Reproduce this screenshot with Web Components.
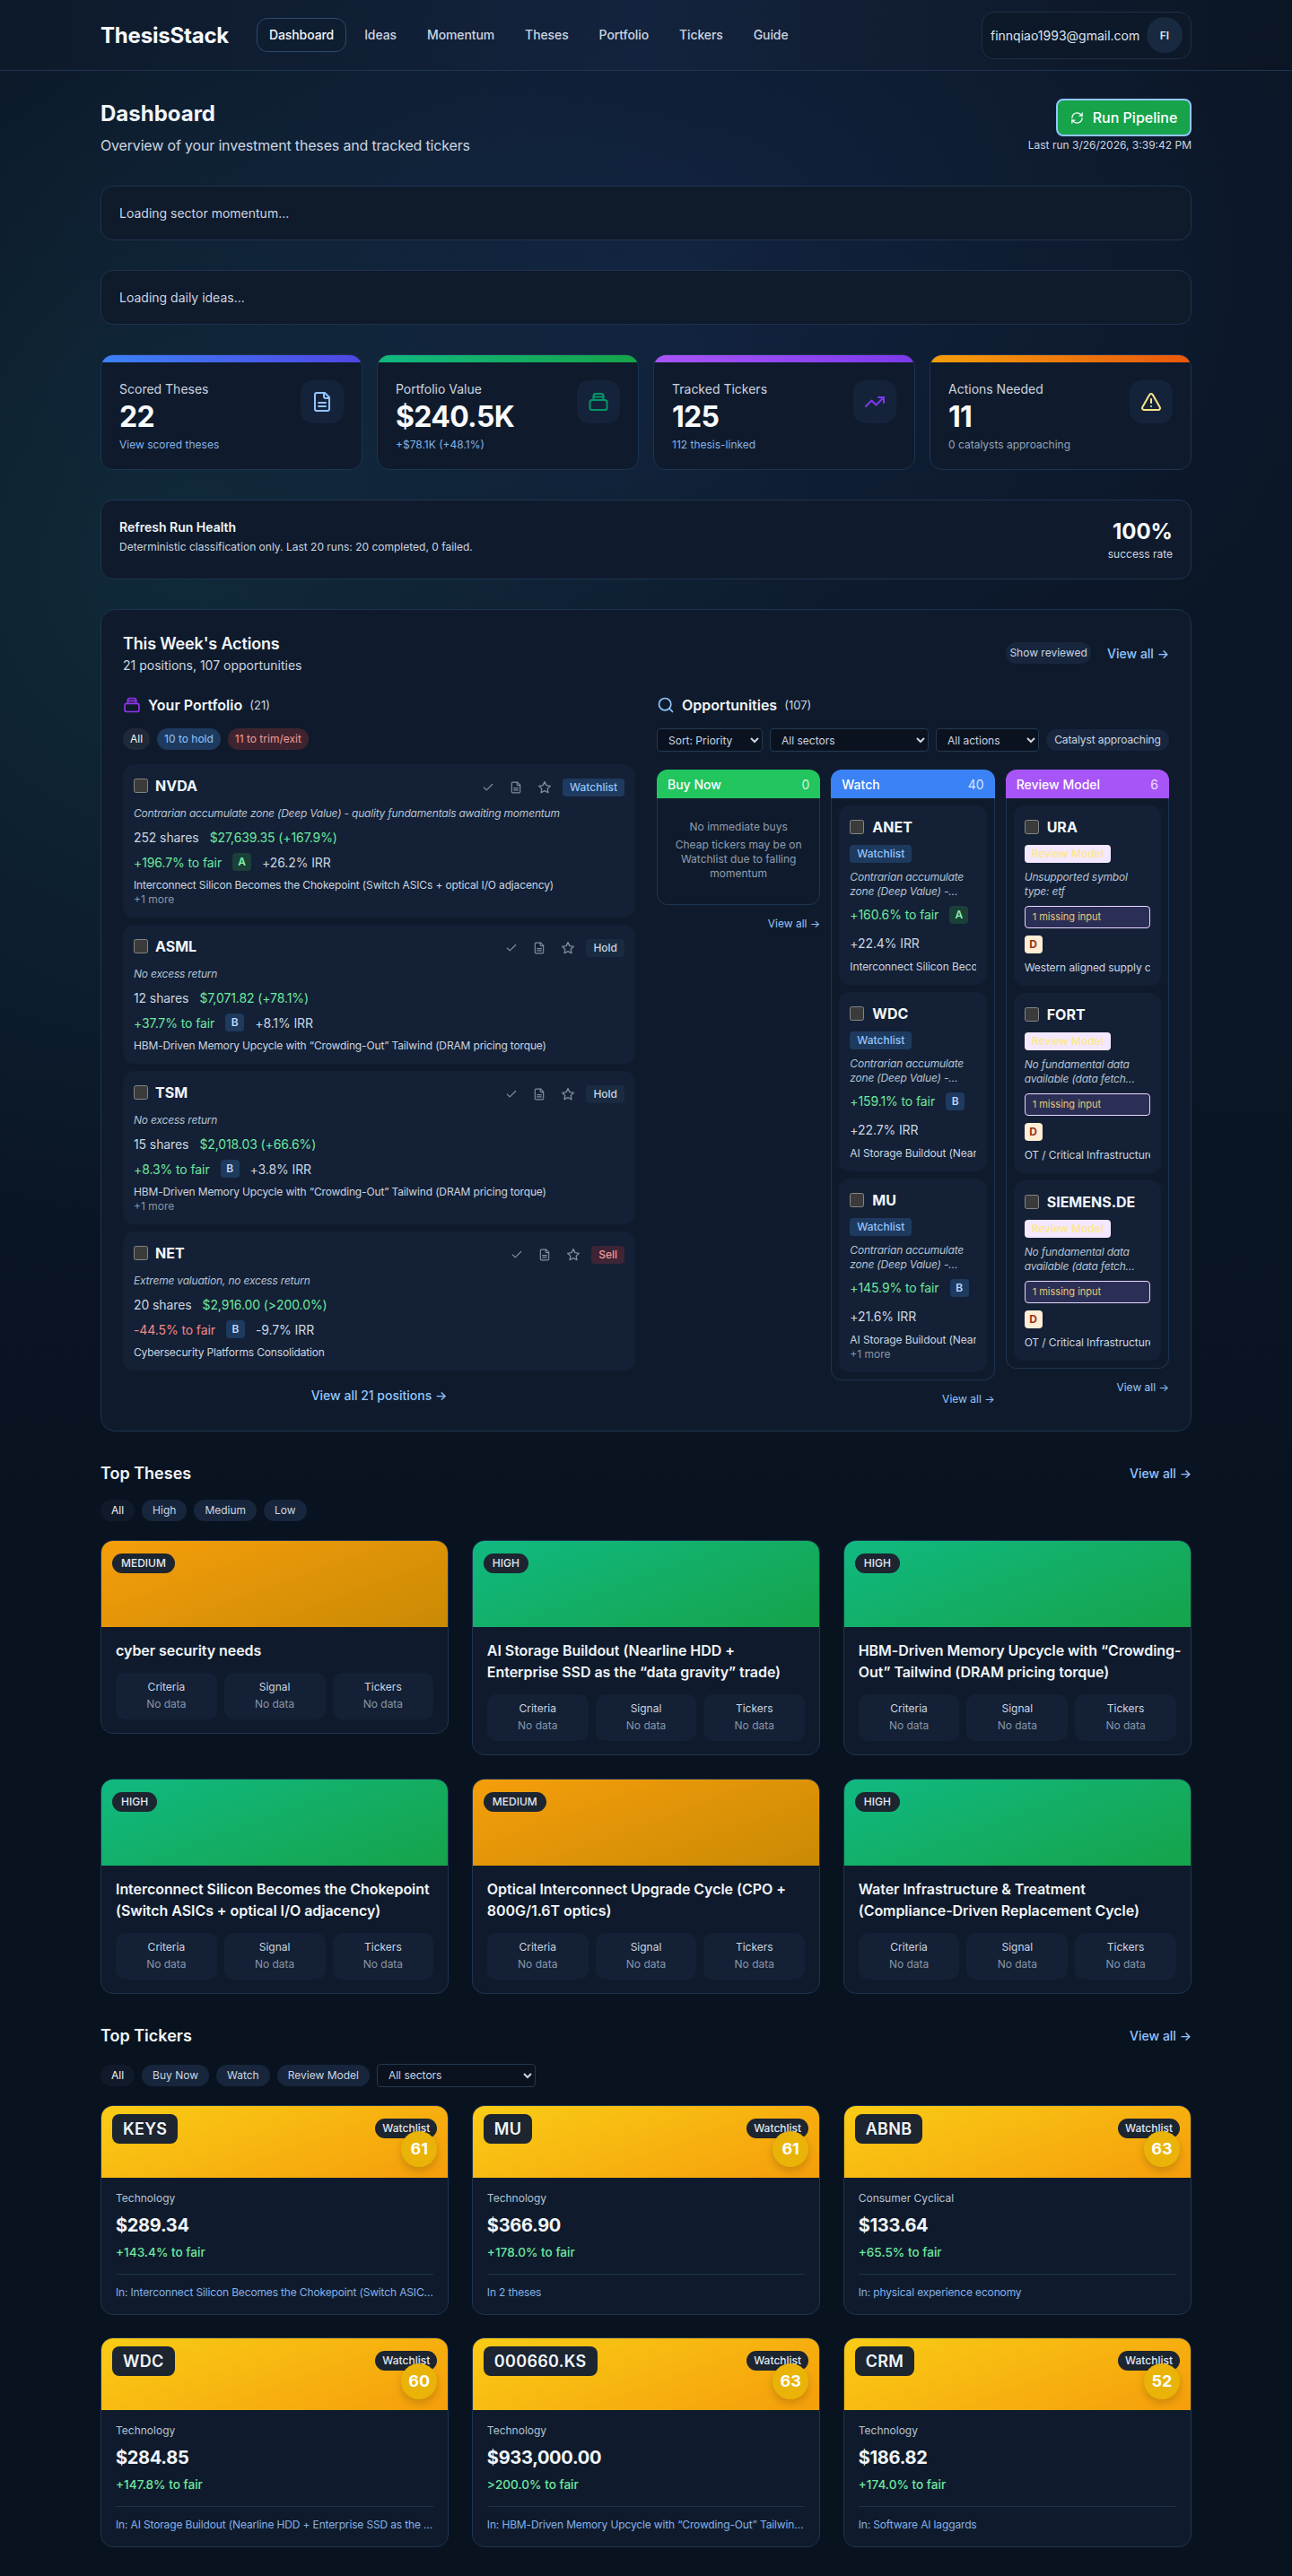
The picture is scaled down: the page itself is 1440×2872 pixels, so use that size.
<!DOCTYPE html>
<html lang="en">
<head>
<meta charset="utf-8">
<title>ThesisStack</title>
<style>
	html { background: #08111e; }
	body {
		margin: 0;
		min-height: 2872px;
		font-family: Inter, "Liberation Sans", sans-serif;
		color: #e2e8f0;
		background:
			radial-gradient(760px 620px at 52% 10%, rgba(24,46,84,.55), transparent 100%),
			radial-gradient(720px 760px at 14% 22%, rgba(20,58,72,.55), transparent 100%),
			linear-gradient(180deg, #0b1626 0%, #0b1626 40%, #09121f 62%, #09121f 100%);
		background-repeat: no-repeat;
	}
	main { display: block; padding: 32px 112px; }
	section-gap { display: block; height: 33px; }
	.stats { display: grid; grid-template-columns: repeat(4, 1fr); gap: 16px; }
</style>
</head>
<body>
<app-header></app-header>
<main>
	<page-head></page-head>
	<loading-card>Loading sector momentum...</loading-card>
	<section-gap></section-gap>
	<loading-card>Loading daily ideas...</loading-card>
	<section-gap></section-gap>
	<div class="stats">
		<stat-card label="Scored Theses" value="22" sub="View scored theses" bar="#3b82f6,#4f46e5" icon="file" tint="#93c5fd" link></stat-card>
		<stat-card label="Portfolio Value" value="$240.5K" sub="+$78.1K (+48.1%)" bar="#10b981,#16a34a" icon="bag" tint="#059669" link></stat-card>
		<stat-card label="Tracked Tickers" value="125" sub="112 thesis-linked" bar="#a855f7,#7c3aed" icon="trend" tint="#7c3aed" link></stat-card>
		<stat-card label="Actions Needed" value="11" sub="0 catalysts approaching" bar="#f59e0b,#ea580c" icon="alert" tint="#fde68a"></stat-card>
	</div>
	<section-gap></section-gap>
	<health-card></health-card>
	<section-gap></section-gap>
	<actions-panel></actions-panel>
	<thesis-section></thesis-section>
	<ticker-section></ticker-section>
</main>
<script>
const base = `
	:host { display: block; box-sizing: border-box; }
	* { box-sizing: border-box; }
	a { color: #93c5fd; text-decoration: none; }
	svg { display: block; fill: none; stroke: currentColor; stroke-width: 2; stroke-linecap: round; stroke-linejoin: round; }
`;
const icons = {
	file: '<path d="M15 2H6a2 2 0 0 0-2 2v16a2 2 0 0 0 2 2h12a2 2 0 0 0 2-2V7z"/><path d="M14 2v4a2 2 0 0 0 2 2h4"/><path d="M16 13H8"/><path d="M16 17H8"/>',
	bag: '<path d="M6.5 10V5.5a2.5 2.5 0 0 1 2.5-2.5h6a2.5 2.5 0 0 1 2.5 2.5V10"/><path d="M6.5 6.5h11"/><rect x="2.5" y="10" width="19" height="11" rx="2.5"/>',
	trend: '<polyline points="22 7 13.5 15.5 8.5 10.5 2 17"/><polyline points="16 7 22 7 22 13"/>',
	alert: '<path d="m21.73 18-8-14a2 2 0 0 0-3.48 0l-8 14A2 2 0 0 0 4 21h16a2 2 0 0 0 1.73-3"/><path d="M12 9v4"/><path d="M12 17h.01"/>',
	refresh: '<path d="M3 12a9 9 0 0 1 9-9 9.75 9.75 0 0 1 6.74 2.74L21 8"/><path d="M21 3v5h-5"/><path d="M21 12a9 9 0 0 1-9 9 9.75 9.75 0 0 1-6.74-2.74L3 16"/><path d="M8 16H3v5"/>',
	search: '<circle cx="11" cy="11" r="8"/><path d="m21 21-4.3-4.3"/>',
	check: '<path d="M20 6 9 17l-5-5"/>',
	star: '<path d="M12 2.5l2.95 5.97 6.58.96-4.76 4.64 1.12 6.55L12 17.52l-5.89 3.1 1.12-6.55-4.76-4.64 6.58-.96z"/>'
};
const icon = (name, size, width) => `<svg viewBox="0 0 24 24" width="${size}" height="${size}" style="stroke-width:${width || 2}">${icons[name]}</svg>`;

class BaseElement extends HTMLElement {
	constructor() {
		super();
		this.attachShadow({ mode: "open" });
	}
	connectedCallback() {
		this.shadowRoot.innerHTML = `<style>${base}${this.constructor.styles}</style>${this.render()}`;
	}
	attr(name) {
		return this.getAttribute(name) || '';
	}
}

class AppHeader extends BaseElement {
	static styles = `
		:host { height: 79px; border-bottom: 1px solid #20344f;
			background: linear-gradient(90deg, #0d1a2b 0%, #14233d 50%, #0b1523 100%); }
		.bar { height: 78px; padding: 0 112px; display: flex; align-items: center; }
		.logo { font-size: 24px; font-weight: 700; color: #f8fafc; width: 174px; letter-spacing: -.2px; }
		nav { display: flex; gap: 6px; flex: 1; letter-spacing: -.1px; }
		nav a { height: 38px; line-height: 36px; padding: 0 13px; border: 1px solid transparent; border-radius: 12px; font-size: 14px; font-weight: 500; color: #cbd5e1; }
		nav a.on { color: #f1f5f9; border-color: #2c4a6e; background: #0f1d31; }
		.user { height: 53px; width: 234px; display: flex; align-items: center; justify-content: space-between; padding: 0 9px; border: 1px solid #1e3048; border-radius: 14px; background: #0d1828; font-size: 14px; color: #dbe4ee; }
		.avatar { width: 40px; height: 40px; border-radius: 50%; background: #192940; display: flex; align-items: center; justify-content: center; font-size: 12px; font-weight: 600; }
	`;
	render() {
		const links = ['Dashboard', 'Ideas', 'Momentum', 'Theses', 'Portfolio', 'Tickers', 'Guide'];
		return `<div class="bar"><div class="logo">ThesisStack</div>
			<nav>${links.map((l, i) => `<a class="${i ? '' : 'on'}">${l}</a>`).join('')}</nav>
			<div class="user"><span>finnqiao1993@gmail.com</span><span class="avatar">FI</span></div></div>`;
	}
}

class PageHead extends BaseElement {
	static styles = `
		:host { margin-bottom: 33px; }
		.row { display: flex; justify-content: space-between; }
		h1 { margin: 0; font-size: 24px; line-height: 32px; font-weight: 700; color: #f1f5f9; }
		p { margin: 7px 0 0; font-size: 16px; line-height: 24px; color: #cbd5e1; letter-spacing: -.17px; }
		.right { display: flex; flex-direction: column; align-items: flex-end; margin-top: -1px; }
		button { font: inherit; height: 42px; width: 151px; display: flex; align-items: center; justify-content: center; gap: 10px; background: #16a34a; color: #fff; font-size: 16px; font-weight: 500; border: 2px solid #93c5fd; border-radius: 8px; }
		.last { font-size: 12px; line-height: 20px; color: #cbd5e1; }
	`;
	render() {
		return `<div class="row"><div><h1>Dashboard</h1><p>Overview of your investment theses and tracked tickers</p></div>
			<div class="right"><button>${icon('refresh', 15)}Run Pipeline</button><div class="last">Last run 3/26/2026, 3:39:42 PM</div></div></div>`;
	}
}

class LoadingCard extends BaseElement {
	static styles = `
		:host { height: 61px; padding: 0 20px; display: flex; align-items: center; background: #0f1a2a; border: 1px solid #1e3350; border-radius: 14px; font-size: 14px; color: #cbd5e1; }
	`;
	render() { return `<slot></slot>`; }
}

class StatCard extends BaseElement {
	static styles = `
		:host { height: 129px; overflow: hidden; background: #0f1b2c; border: 1px solid #1e3350; border-radius: 14px; }
		.bar { height: 8px; }
		.in { padding: 20px; display: flex; justify-content: space-between; }
		.label { font-size: 14px; line-height: 20px; color: #cbd5e1; }
		.value { font-size: 32px; line-height: 38px; margin-top: 2px; font-weight: 700; color: #f8fafc; letter-spacing: -.7px; }
		.sub { font-size: 12px; line-height: 16px; margin-top: 4px; color: #94a3b8; }
		.sub.link { color: #85b1e8; }
		.box { width: 48px; height: 48px; border-radius: 14px; background: #15233a; display: flex; align-items: center; justify-content: center; }
	`;
	render() {
		const [a, b] = this.attr('bar').split(',');
		return `<div class="bar" style="background:linear-gradient(90deg,${a},${b})"></div>
			<div class="in"><div><div class="label">${this.attr('label')}</div><div class="value">${this.attr('value')}</div>
			<div class="sub ${this.hasAttribute('link') ? 'link' : ''}">${this.attr('sub')}</div></div>
			<div class="box" style="color:${this.attr('tint')}">${icon(this.attr('icon'), 24)}</div></div>`;
	}
}

class HealthCard extends BaseElement {
	static styles = `
		:host { height: 89px; padding: 0 20px; display: flex; justify-content: space-between; background: #0f1b2c; border: 1px solid #1e3350; border-radius: 14px; }
		.t { margin-top: 20px; font-size: 14px; line-height: 20px; font-weight: 600; color: #f1f5f9; }
		.s { margin-top: 4px; font-size: 12px; line-height: 16px; color: #cbd5e1; }
		.r { text-align: right; margin-top: 19px; }
		.n { font-size: 24px; line-height: 32px; font-weight: 700; color: #f8fafc; }
		.m { font-size: 12px; line-height: 16px; color: #cbd5e1; margin-top: 1px; }
	`;
	render() {
		return `<div><div class="t">Refresh Run Health</div><div class="s">Deterministic classification only. Last 20 runs: 20 completed, 0 failed.</div></div>
			<div class="r"><div class="n">100%</div><div class="m">success rate</div></div>`;
	}
}

class FilterChip extends BaseElement {
	static styles = `
		:host { display: inline-block; height: 24px; line-height: 24px; padding: 0 var(--chip-pad, 12px); border-radius: 12px; font-size: 12px; font-weight: 400; white-space: nowrap; text-align: center; background: var(--chip-bg, #17263c); color: var(--chip-fg, #cbd5e1); }
	`;
	render() { return `<slot></slot>`; }
}

class PositionCard extends BaseElement {
	static styles = `
		:host { padding: 16px 12px 12px; background: #132035; border-radius: 12px; margin-bottom: 8px; }
		.head { display: flex; align-items: flex-start; height: 20px; }
		input { color-scheme: dark; width: 16px; height: 16px; margin: 0 8px 0 0; }
		.ticker { font-size: 16px; line-height: 16px; font-weight: 700; color: #f1f5f9; flex: 1; }
		.acts { display: flex; align-items: center; gap: 9px; color: #7f8ea3; height: 20px; margin-right: 8px; }
		.acts span { padding: 0 4px; }
		.tag { height: 20px; line-height: 20px; padding: 0 8px; border-radius: 4px; font-size: 12px; font-weight: 500; }
		.why { margin-top: 11px; font-size: 12px; line-height: 16px; font-style: italic; color: #b6c2d2; letter-spacing: -.2px; }
		.row { margin-top: 8px; height: 20px; display: flex; align-items: center; font-size: 14px; color: #cbd5e1; letter-spacing: -.1px; }
		.green { color: #6ee7a0; }
		.red { color: #f08a8a; }
		.grade { width: 21px; height: 20px; line-height: 20px; border-radius: 4px; text-align: center; font-size: 12px; font-weight: 600; margin: 0 12px; }
		.th { margin-top: 8px; font-size: 12px; line-height: 16px; color: #cbd5e1; letter-spacing: -.15px; }
		.more { font-size: 12px; line-height: 16px; color: #8795a8; }
	`;
	render() {
		const tag = this.attr('tag');
		const tagColor = { Watchlist: 'background:#1e3a5f;color:#93c5fd', Hold: 'background:#1a2a40;color:#cbd5e1', Sell: 'background:#3d2535;color:#f19a9a' }[tag];
		const grade = this.attr('grade') == 'A' ? 'background:#1a4038;color:#86efac' : 'background:#1e3a5f;color:#bfdbfe';
		return `<div class="head"><input type="checkbox"><div class="ticker">${this.attr('ticker')}</div>
				<div class="acts"><span>${icon('check', 14)}</span><span>${icon('file', 14)}</span><span>${icon('star', 16)}</span></div>
				<div class="tag" style="${tagColor}">${tag}</div></div>
			<div class="why">${this.attr('why')}</div>
			<div class="row"><span>${this.attr('shares')} shares</span><span class="green" style="margin-left:12px">${this.attr('gain')}</span></div>
			<div class="row"><span class="${this.attr('fair')[0] == '-' ? 'red' : 'green'}">${this.attr('fair')} to fair</span><span class="grade" style="${grade}">${this.attr('grade')}</span><span>${this.attr('irr')} IRR</span></div>
			<div class="th">${this.attr('thesis')}</div>
			${this.hasAttribute('more') ? '<div class="more">+1 more</div>' : ''}`;
	}
}

class OppCard extends BaseElement {
	static styles = `
		:host { padding: 16px 12px 12px; background: #132035; border-radius: 12px; }
		.head { display: flex; height: 16px; }
		input { color-scheme: dark; width: 16px; height: 16px; margin: 0 9px 0 0; }
		.ticker { font-size: 16px; line-height: 16px; font-weight: 700; color: #f1f5f9; }
		.tag { display: inline-block; vertical-align: top; margin-top: 12px; height: 20px; line-height: 20px; padding: 0 8px; border-radius: 4px; font-size: 12px; font-weight: 500; background: #1e3a5f; color: #93c5fd; }
		.tag.review { background: #f3e8ff; color: #fde68a; }
		.why { margin-top: 8px; font-size: 12px; line-height: 16px; font-style: italic; color: #b6c2d2; letter-spacing: -.2px; }
		.row { margin-top: 8px; display: flex; flex-wrap: wrap; align-items: center; column-gap: 12px; row-gap: 12px; font-size: 14px; line-height: 20px; color: #cbd5e1; letter-spacing: -.1px; }
		.green { color: #6ee7a0; }
		.grade { width: 21px; height: 20px; line-height: 20px; border-radius: 4px; text-align: center; font-size: 12px; font-weight: 600; }
		.missing { margin-top: 8px; height: 25px; line-height: 22px; padding: 0 8px; border: 1px solid #e9d5ff; border-radius: 4px; background: #2b2f55; color: #e3c77c; font-size: 11px; }
		.d { margin-top: 8px; width: 20px; height: 20px; line-height: 20px; border-radius: 4px; text-align: center; font-size: 12px; font-weight: 700; background: #ffedd5; color: #9a3412; }
		.th { margin-top: 8px; font-size: 12px; line-height: 16px; color: #cbd5e1; white-space: nowrap; overflow: hidden; letter-spacing: -.1px; }
		.more { font-size: 12px; line-height: 16px; color: #8795a8; }
	`;
	render() {
		const head = `<div class="head"><input type="checkbox"><div class="ticker">${this.attr('ticker')}</div></div>`;
		if (this.hasAttribute('review')) {
			return `${head}<div class="tag review">Review Model</div><div class="why">${this.attr('why')}</div>
				<div class="missing">1 missing input</div><div class="d">D</div><div class="th">${this.attr('thesis')}</div>`;
		}
		const grade = this.attr('grade') == 'A' ? 'background:#1a4038;color:#86efac' : 'background:#1e3a5f;color:#bfdbfe';
		return `${head}<div class="tag">Watchlist</div><div class="why">${this.attr('why')}</div>
			<div class="row"><span class="green">${this.attr('fair')} to fair</span><span class="grade" style="${grade}">${this.attr('grade')}</span><span style="width:100%">${this.attr('irr')} IRR</span></div>
			<div class="th">${this.attr('thesis')}</div>${this.hasAttribute('more') ? '<div class="more">+1 more</div>' : ''}`;
	}
}

class OppColumn extends BaseElement {
	static styles = `
		:host { min-width: 0; }
		.top { height: 32px; padding: 0 12px; display: flex; align-items: center; justify-content: space-between; border-radius: 12px 12px 0 0; font-size: 14px; font-weight: 500; color: #fff; }
		.top b { font-weight: 400; opacity: .8; }
		.body { padding: 8px; display: flex; flex-direction: column; gap: 8px; border: 1px solid #1e3350; border-top: 0; border-radius: 0 0 12px 12px; }
		.all { margin-top: 12px; font-size: 12px; line-height: 17px; text-align: right; }
	`;
	render() {
		return `<div class="top" style="background:${this.attr('color')}"><span>${this.attr('name')}</span><b>${this.attr('count')}</b></div>
			<div class="body"><slot></slot></div><div class="all"><a>View all →</a></div>`;
	}
}

class EmptyNote extends BaseElement {
	static styles = `
		:host { height: 102px; padding-top: 16px; text-align: center; font-size: 12px; line-height: 16px; color: #8f9db0; }
		.a { margin-bottom: 4px; }
	`;
	render() {
		return `<div class="a">No immediate buys</div><div>Cheap tickers may be on Watchlist due to falling momentum</div>`;
	}
}

class ActionsPanel extends BaseElement {
	static styles = `
		:host { background: #0f1b2c; border: 1px solid #1e3350; border-radius: 16px; padding: 24px; height: 917px; }
		.head { display: flex; justify-content: space-between; align-items: center; height: 48px; }
		h2 { margin: 0; font-size: 18px; line-height: 28px; font-weight: 600; color: #f1f5f9; letter-spacing: -.15px; }
		.sub { font-size: 14px; line-height: 20px; color: #cbd5e1; }
		.tools { display: flex; align-items: center; gap: 18px; font-size: 14px; font-weight: 500; }
		.cols { display: grid; grid-template-columns: 1fr 1fr; gap: 24px; margin-top: 22px; }
		.title { height: 24px; display: flex; align-items: center; font-size: 16px; font-weight: 600; color: #f1f5f9; }
		.title svg { margin-right: 9px; }
		.title small { margin-left: 8px; font-size: 13px; font-weight: 400; color: #cbd5e1; }
		.chips { display: flex; gap: 8px; margin: 14px 0 16px; --chip-pad: 8px; }
		.filters { display: flex; gap: 8px; margin: 14px 0 20px; align-items: center; height: 26px; }
		select { font: inherit; font-size: 12px; height: 26px; color-scheme: dark; color: #cbd5e1; background: #0a1220; border: 1px solid #24384f; border-radius: 4px; padding: 0 8px; }
		.board { display: grid; grid-template-columns: repeat(3, 1fr); gap: 12px; align-items: start; }
		.all { display: block; margin-top: 18px; text-align: center; font-size: 14px; line-height: 20px; font-weight: 500; }
	`;
	render() {
		const t1 = 'Interconnect Silicon Becomes the Chokepoint (Switch ASICs + optical I/O adjacency)';
		const t2 = 'HBM-Driven Memory Upcycle with “Crowding-Out” Tailwind (DRAM pricing torque)';
		const deep = 'Contrarian accumulate zone (Deep Value) -…';
		const nodata = 'No fundamental data available (data fetch…';
		return `<div class="head"><div><h2>This Week's Actions</h2><div class="sub">21 positions, 107 opportunities</div></div>
			<div class="tools"><filter-chip style="width:95px;--chip-pad:0px">Show reviewed</filter-chip><a>View all →</a></div></div>
			<div class="cols"><div>
				<div class="title" style="color:#f1f5f9"><span style="color:#9333ea">${icon('bag', 20)}</span><span style="margin-left:-1px">Your Portfolio</span><small>(21)</small></div>
				<div class="chips">
					<filter-chip style="--chip-bg:#1f2937;--chip-fg:#f1f5f9">All</filter-chip>
					<filter-chip style="--chip-bg:#1e3a5f;--chip-fg:#93c5fd">10 to hold</filter-chip>
					<filter-chip style="--chip-bg:#3f2430;--chip-fg:#f19a9a">11 to trim/exit</filter-chip>
				</div>
				<position-card ticker="NVDA" tag="Watchlist" why="Contrarian accumulate zone (Deep Value) - quality fundamentals awaiting momentum" shares="252" gain="$27,639.35 (+167.9%)" fair="+196.7%" grade="A" irr="+26.2%" thesis="${t1}" more></position-card>
				<position-card ticker="ASML" tag="Hold" why="No excess return" shares="12" gain="$7,071.82 (+78.1%)" fair="+37.7%" grade="B" irr="+8.1%" thesis="${t2}"></position-card>
				<position-card ticker="TSM" tag="Hold" why="No excess return" shares="15" gain="$2,018.03 (+66.6%)" fair="+8.3%" grade="B" irr="+3.8%" thesis="${t2}" more></position-card>
				<position-card ticker="NET" tag="Sell" why="Extreme valuation, no excess return" shares="20" gain="$2,916.00 (&gt;200.0%)" fair="-44.5%" grade="B" irr="-9.7%" thesis="Cybersecurity Platforms Consolidation"></position-card>
				<a class="all">View all 21 positions →</a>
			</div><div>
				<div class="title"><span style="color:#93c5fd">${icon('search', 20)}</span><span style="margin-left:-1px">Opportunities</span><small>(107)</small></div>
				<div class="filters">
					<select style="width:118px"><option>Sort: Priority</option></select>
					<select style="width:177px"><option>All sectors</option></select>
					<select style="width:115px"><option>All actions</option></select>
					<filter-chip style="width:137px;--chip-pad:0px;letter-spacing:-.1px">Catalyst approaching</filter-chip>
				</div>
				<div class="board">
					<opp-column name="Buy Now" count="0" color="#22c55e"><empty-note></empty-note></opp-column>
					<opp-column name="Watch" count="40" color="#3b82f6">
						<opp-card ticker="ANET" why="${deep}" fair="+160.6%" grade="A" irr="+22.4%" thesis="Interconnect Silicon Becomes the Chokepoint"></opp-card>
						<opp-card ticker="WDC" why="${deep}" fair="+159.1%" grade="B" irr="+22.7%" thesis="AI Storage Buildout (Nearline HDD + Enterprise SSD)"></opp-card>
						<opp-card ticker="MU" why="${deep}" fair="+145.9%" grade="B" irr="+21.6%" thesis="AI Storage Buildout (Nearline HDD + Enterprise SSD)" more></opp-card>
					</opp-column>
					<opp-column name="Review Model" count="6" color="#a855f7">
						<opp-card review ticker="URA" why="Unsupported symbol type: etf" thesis="Western aligned supply chain"></opp-card>
						<opp-card review ticker="FORT" why="${nodata}" thesis="OT / Critical Infrastructure Security"></opp-card>
						<opp-card review ticker="SIEMENS.DE" why="${nodata}" thesis="OT / Critical Infrastructure Security"></opp-card>
					</opp-column>
				</div>
			</div></div>`;
	}
}

class SectionHead extends BaseElement {
	static styles = `
		.row { display: flex; justify-content: space-between; align-items: center; height: 28px; }
		h2 { margin: 0; font-size: 18px; font-weight: 600; color: #f1f5f9; }
		a { font-size: 14px; font-weight: 500; }
		.chips { display: flex; gap: 8px; align-items: center; height: 26px; }
	`;
	render() {
		return `<div class="row"><h2>${this.attr('title')}</h2><a>View all →</a></div><div class="chips" style="margin-top:${this.attr('gap')}px"><slot></slot></div>`;
	}
}

class ThesisCard extends BaseElement {
	static styles = `
		:host { background: #0f1b2c; border: 1px solid #1e3350; border-radius: 14px; overflow: hidden; }
		.img { height: 96px; padding: 13px 12px; }
		.badge { display: inline-block; height: 22px; line-height: 22px; padding: 0 10px; border-radius: 11px; background: #1c2530; color: #e2e8f0; font-size: 12px; font-weight: 500; }
		.in { padding: 14px 16px 15px; }
		h3 { margin: 0; font-size: 16px; line-height: 24px; font-weight: 600; color: #f1f5f9; letter-spacing: -.05px; }
		h3 span { white-space: nowrap; }
		.stats { display: grid; grid-template-columns: repeat(3, 1fr); gap: 8px; margin-top: 13px; }
		.stat { height: 52px; border-radius: 10px; background: #132035; text-align: center; font-size: 12px; padding-top: 6px; line-height: 19px; color: #cbd5e1; }
		.stat div { color: #8795a8; }
	`;
	render() {
		const high = this.attr('level') == 'HIGH';
		const bg = high ? '#10b981,#16a34a' : '#f59e0b,#ca8a04';
		const stat = l => `<div class="stat">${l}<div>No data</div></div>`;
		return `<div class="img" style="background:linear-gradient(160deg,${bg})"><span class="badge">${this.attr('level')}</span></div>
			<div class="in"><h3>${this.attr('title')}</h3><div class="stats">${stat('Criteria')}${stat('Signal')}${stat('Tickers')}</div></div>`;
	}
}

class ThesisSection extends BaseElement {
	static styles = `
		:host { margin-top: 32px; }
		.grid { display: grid; grid-template-columns: repeat(3, 1fr); gap: 25.6px; align-items: start; margin-top: 20px; }
	`;
	render() {
		const rows = [
			['MEDIUM', 'cyber security needs'],
			['HIGH', 'AI Storage Buildout (Nearline HDD + Enterprise SSD as the “data gravity” trade)'],
			['HIGH', '<span>HBM-Driven Memory Upcycle with “Crowding-</span><br>Out” Tailwind (DRAM pricing torque)'],
			['HIGH', 'Interconnect Silicon Becomes the Chokepoint (Switch ASICs + optical I/O adjacency)'],
			['MEDIUM', 'Optical Interconnect Upgrade Cycle (CPO + 800G/1.6T optics)'],
			['HIGH', 'Water Infrastructure &amp; Treatment (Compliance-Driven Replacement Cycle)']
		];
		return `<section-head title="Top Theses" gap="15"><filter-chip style="--chip-bg:#111a2a;--chip-fg:#f1f5f9">All</filter-chip><filter-chip>High</filter-chip><filter-chip>Medium</filter-chip><filter-chip>Low</filter-chip></section-head>
			<div class="grid">${rows.map(r => `<thesis-card level="${r[0]}" title="${r[1]}"></thesis-card>`).join('')}</div>`;
	}
}

class TickerCard extends BaseElement {
	static styles = `
		:host { height: 234px; background: #0f1b2c; border: 1px solid #1e3350; border-radius: 14px; overflow: hidden; }
		.img { position: relative; height: 80px; padding: 9px 12px; background: linear-gradient(160deg, #facc15, #f59e0b); }
		.sym { display: inline-block; height: 33px; line-height: 33px; padding: 0 12px; border-radius: 8px; background: #1c2530; color: #f1f5f9; font-size: 18px; font-weight: 600; letter-spacing: .3px; }
		.tag { position: absolute; top: 14px; right: 12px; height: 22px; line-height: 22px; padding: 0 8px; border-radius: 11px; background: #1c2530; color: #e2e8f0; font-size: 12px; font-weight: 500; }
		.score { position: absolute; top: 28px; right: 12px; width: 40px; height: 40px; line-height: 40px; border-radius: 50%; text-align: center; background: #eab308; color: #fff; font-size: 18px; font-weight: 700; box-shadow: 0 4px 10px rgba(0,0,0,.18); }
		.in { padding: 15px 16px 16px; }
		.sector { font-size: 12px; line-height: 16px; color: #b6c2d2; }
		.price { margin-top: 8px; font-size: 20px; line-height: 28px; font-weight: 700; color: #f1f5f9; letter-spacing: -.3px; }
		.fair { margin-top: 7px; font-size: 13.6px; line-height: 18px; font-weight: 500; color: #6ee7a0; }
		.in-th { margin-top: 15px; padding-top: 12px; border-top: 1px solid #1e3350; font-size: 12px; line-height: 16px; color: #85b1e8; letter-spacing: -.15px; white-space: nowrap; overflow: hidden; text-overflow: ellipsis; }
	`;
	render() {
		return `<div class="img"><span class="sym">${this.attr('sym')}</span><span class="tag">Watchlist</span><span class="score">${this.attr('score')}</span></div>
			<div class="in"><div class="sector">${this.attr('sector')}</div><div class="price">${this.attr('price')}</div>
			<div class="fair">${this.attr('fair')} to fair</div><div class="in-th">${this.attr('in')}</div></div>`;
	}
}

class TickerSection extends BaseElement {
	static styles = `
		:host { margin-top: 33px; }
		.grid { display: grid; grid-template-columns: repeat(3, 1fr); gap: 25.6px; margin-top: 20px; }
		select { font: inherit; font-size: 12px; width: 177px; height: 26px; color-scheme: dark; color: #cbd5e1; background: #0a1220; border: 1px solid #24384f; border-radius: 4px; padding: 0 8px; }
	`;
	render() {
		const rows = [
			['KEYS', 61, 'Technology', '$289.34', '+143.4%', 'In: Interconnect Silicon Becomes the Chokepoint (Switch ASICs + optical I/O adjacency)'],
			['MU', 61, 'Technology', '$366.90', '+178.0%', 'In 2 theses'],
			['ABNB', 63, 'Consumer Cyclical', '$133.64', '+65.5%', 'In: physical experience economy'],
			['WDC', 60, 'Technology', '$284.85', '+147.8%', 'In: AI Storage Buildout (Nearline HDD + Enterprise SSD as the “data gravity” trade)'],
			['000660.KS', 63, 'Technology', '$933,000.00', '&gt;200.0%', 'In: HBM-Driven Memory Upcycle with “Crowding-Out” Tailwind (DRAM pricing torque)'],
			['CRM', 52, 'Technology', '$186.82', '+174.0%', 'In: Software AI laggards']
		];
		return `<section-head title="Top Tickers" gap="17"><filter-chip style="--chip-bg:#111a2a;--chip-fg:#f1f5f9">All</filter-chip><filter-chip>Buy Now</filter-chip><filter-chip>Watch</filter-chip><filter-chip>Review Model</filter-chip><select><option>All sectors</option></select></section-head>
			<div class="grid">${rows.map(r => `<ticker-card sym="${r[0]}" score="${r[1]}" sector="${r[2]}" price="${r[3]}" fair="${r[4]}" in="${r[5]}"></ticker-card>`).join('')}</div>`;
	}
}

customElements.define('app-header', AppHeader);
customElements.define('page-head', PageHead);
customElements.define('loading-card', LoadingCard);
customElements.define('stat-card', StatCard);
customElements.define('health-card', HealthCard);
customElements.define('filter-chip', FilterChip);
customElements.define('position-card', PositionCard);
customElements.define('opp-card', OppCard);
customElements.define('opp-column', OppColumn);
customElements.define('empty-note', EmptyNote);
customElements.define('actions-panel', ActionsPanel);
customElements.define('section-head', SectionHead);
customElements.define('thesis-card', ThesisCard);
customElements.define('thesis-section', ThesisSection);
customElements.define('ticker-card', TickerCard);
customElements.define('ticker-section', TickerSection);
</script>
</body>
</html>
